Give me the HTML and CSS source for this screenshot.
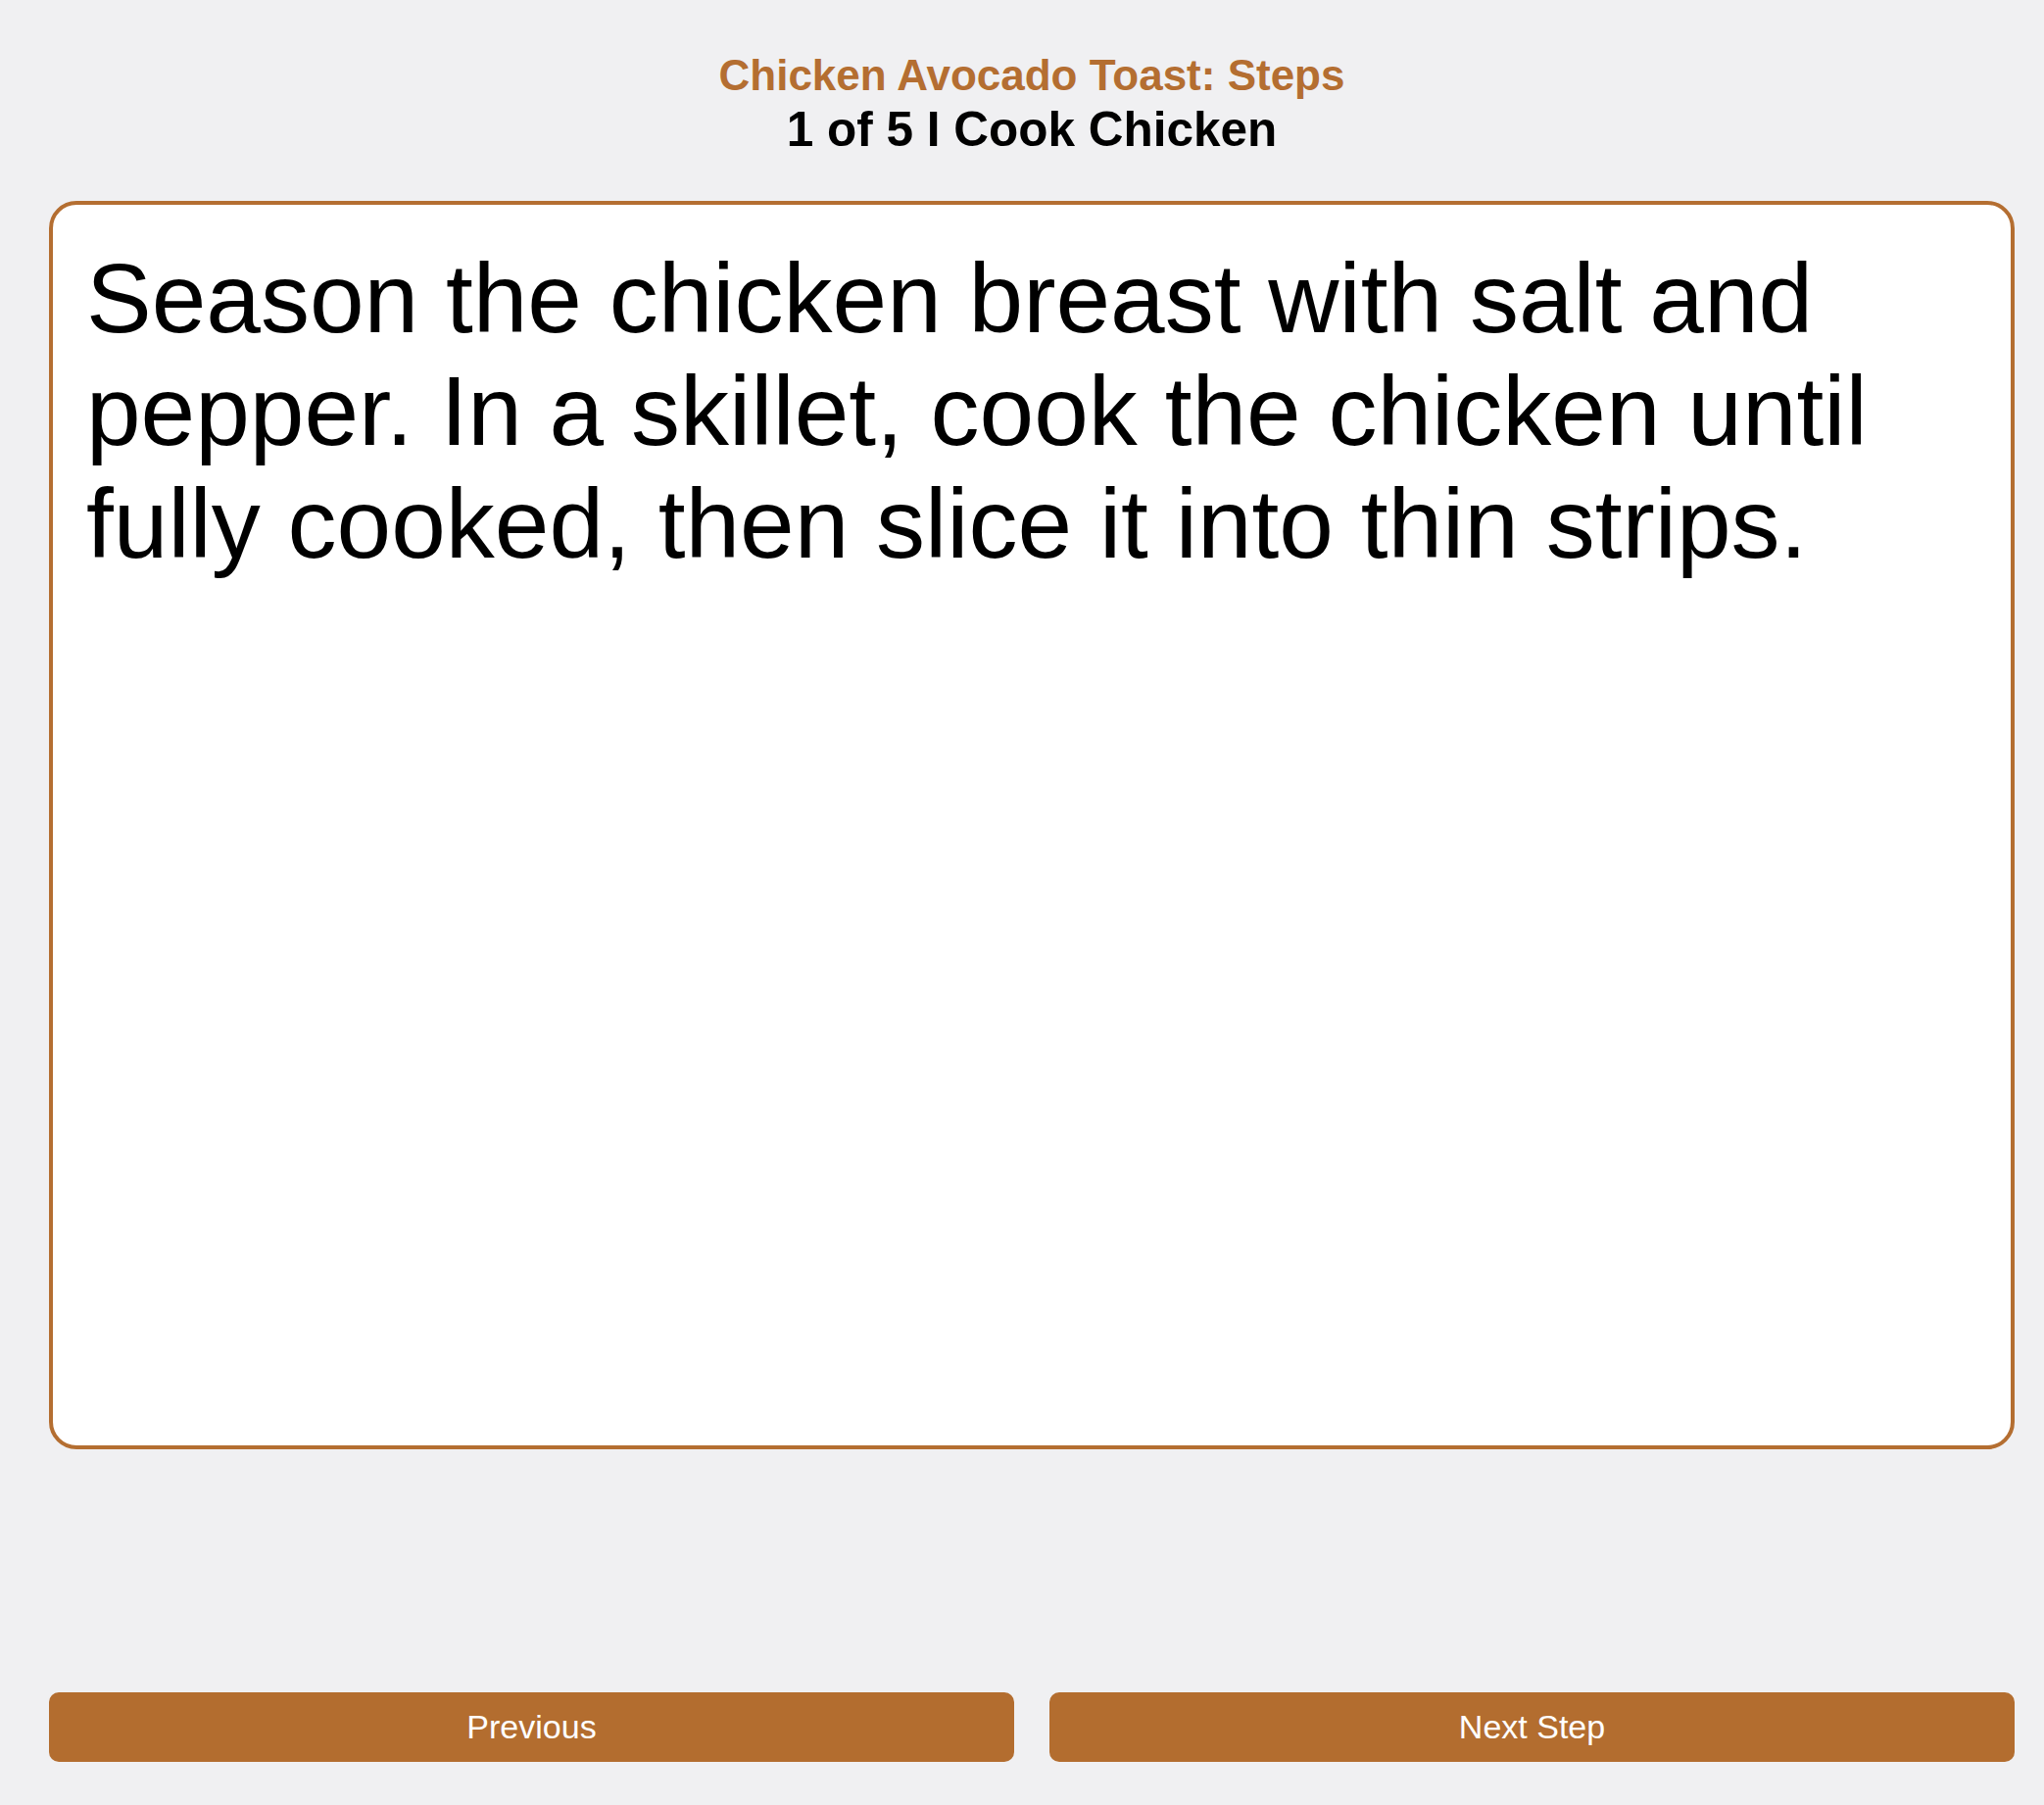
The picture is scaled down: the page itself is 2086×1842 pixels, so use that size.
FILE: index.html
```html
<!DOCTYPE html>
<html lang="en">
<head>
<meta charset="utf-8">
<title>Chicken Avocado Toast: Steps</title>
<link rel="stylesheet" href="styles.css">
</head>
<body>
<div class="page">
  <header class="header">
    <div class="recipe-title">Chicken Avocado Toast: Steps</div>
    <div class="step-title">1 of 5 I Cook Chicken</div>
  </header>
  <main class="card">
    <p class="step-text">Season the chicken breast with salt and pepper. In a skillet, cook the chicken until fully cooked, then slice it into thin strips.</p>
  </main>
  <nav class="actions">
    <button class="btn" type="button">Previous</button>
    <button class="btn" type="button">Next Step</button>
  </nav>
</div>
</body>
</html>
```
FILE: styles.css
```css
html, body {
  margin: 0;
  padding: 0;
  background: #f0f0f2;
}
body {
  font-family: "Liberation Sans", Arial, Helvetica, sans-serif;
}
.page {
  box-sizing: border-box;
  height: 100vh;
  padding: 52px 30px 44px 50px;
  display: flex;
  flex-direction: column;
}
.header {
  text-align: center;
  font-weight: bold;
}
.recipe-title {
  color: #b46e31;
  font-size: 44px;
  line-height: 50px;
}
.step-title {
  color: #000;
  font-size: 49.5px;
  line-height: 56px;
  margin-top: 2px;
}
.card {
  box-sizing: border-box;
  margin-top: 45px;
  height: 1274px;
  background: #fff;
  border: 4px solid #b46e31;
  border-radius: 28px;
  padding: 38px 26px 26px 34px;
}
.step-text {
  margin: 0;
  font-size: 100px;
  line-height: 115px;
  color: #000;
}
.actions {
  margin-top: auto;
  display: grid;
  grid-template-columns: 1fr 1fr;
  gap: 36px;
}
.btn {
  height: 71px;
  border: none;
  border-radius: 10px;
  background: #b36d2f;
  color: #fff;
  font-family: "Liberation Sans", Arial, Helvetica, sans-serif;
  font-size: 34px;
  padding: 0;
}
```
